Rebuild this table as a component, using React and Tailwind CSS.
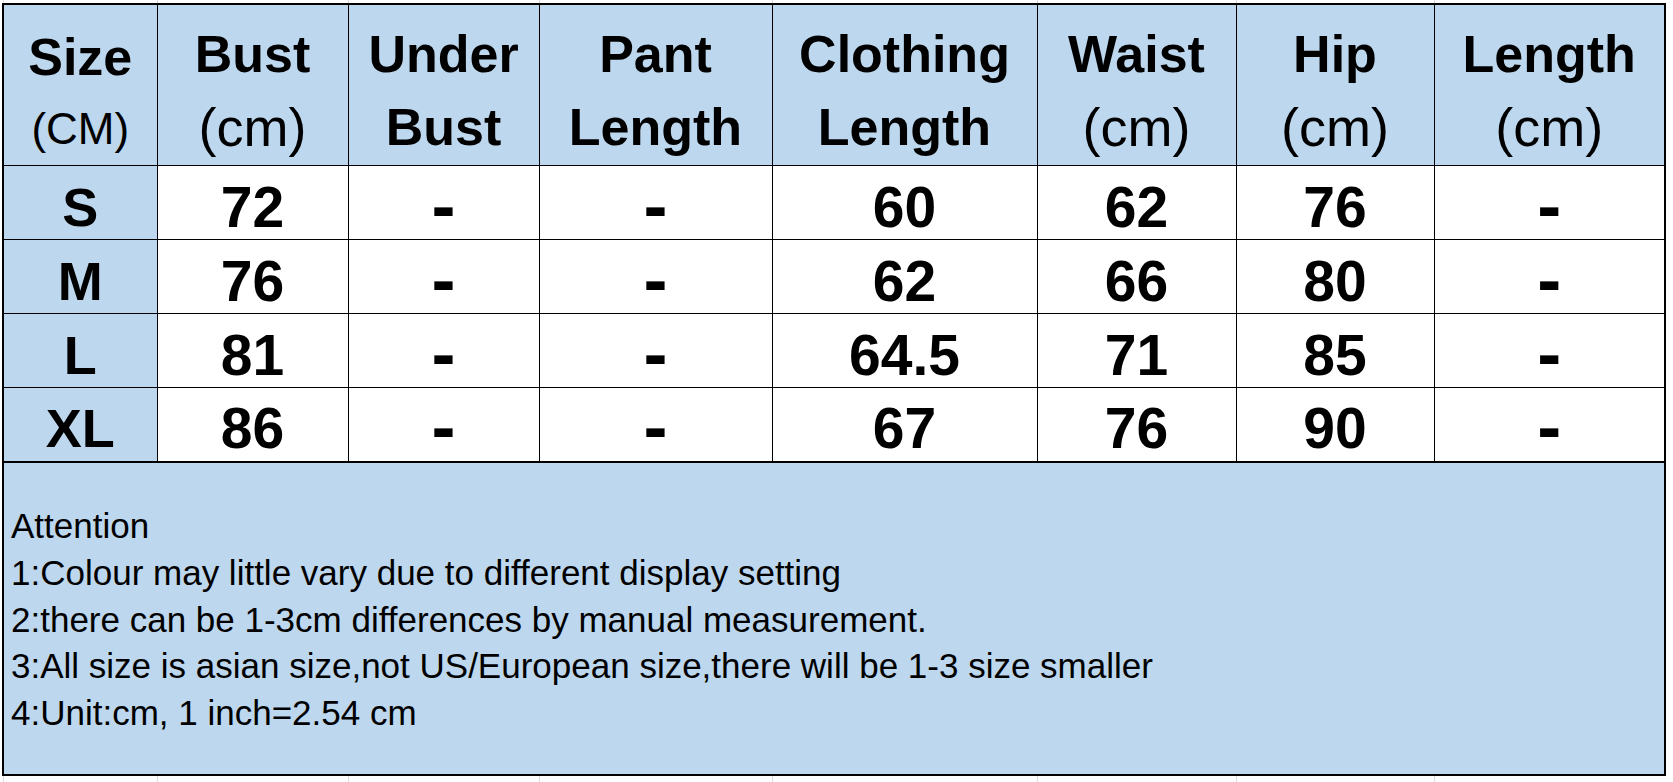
import React from 'react';

const cols = [154, 191, 191, 233, 265, 199, 198, 231];

const headers = [
  { top: 'Bust', bottom: '(cm)', bold2: false },
  { top: 'Under', bottom: 'Bust', bold2: true },
  { top: 'Pant', bottom: 'Length', bold2: true },
  { top: 'Clothing', bottom: 'Length', bold2: true },
  { top: 'Waist', bottom: '(cm)', bold2: false },
  { top: 'Hip', bottom: '(cm)', bold2: false },
  { top: 'Length', bottom: '(cm)', bold2: false },
];

const rows = [
  ['S', '72', '-', '-', '60', '62', '76', '-'],
  ['M', '76', '-', '-', '62', '66', '80', '-'],
  ['L', '81', '-', '-', '64.5', '71', '85', '-'],
  ['XL', '86', '-', '-', '67', '76', '90', '-'],
];

const notes = [
  'Attention',
  '1:Colour may little vary due to different display setting',
  '2:there can be 1-3cm differences by manual measurement.',
  '3:All size is asian size,not US/European size,there will be 1-3 size smaller',
  '4:Unit:cm, 1 inch=2.54 cm',
];

const GridStrip = ({ height }) => (
  <div className="flex" style={{ height }}>
    <div className="w-[3px]" />
    {cols.map((w, i) => (
      <div key={i} className="border-l border-[#dcdcdc] shrink-0" style={{ width: w }} />
    ))}
  </div>
);

const Cell = ({ value, first }) => {
  if (value === '-') {
    return (
      <td className="border border-black text-center align-middle bg-white p-0 pt-[4px] font-bold text-[72px] leading-[50px]">
        -
      </td>
    );
  }
  return (
    <td
      className={`border border-black text-center align-middle p-0 pt-[8px] font-bold leading-[54px] ${
        first ? 'bg-[#bdd7ee] text-[54px]' : 'bg-white text-[57px]'
      }`}
    >
      {value}
    </td>
  );
};

export default function App() {
  return (
    <div className="bg-white w-[1673px] h-[782px] overflow-hidden text-black font-['Liberation_Sans',Arial,sans-serif]">
      <GridStrip height={3} />
      <div className="pl-[2px]">
        <table className="border-collapse border-2 border-black table-fixed" style={{ width: 1663 }}>
          <colgroup>
            {cols.map((w, i) => (
              <col key={i} style={{ width: w }} />
            ))}
          </colgroup>
          <tbody>
            <tr className="h-[161px]">
              <td className="border border-black bg-[#bdd7ee] align-top text-center p-0 pt-[16px]">
                <div className="font-bold text-[52px] leading-[72px]">Size</div>
                <div className="text-[44px] leading-[72px]">(CM)</div>
              </td>
              {headers.map((h, i) => (
                <td key={i} className="border border-black bg-[#bdd7ee] align-top text-center p-0 pt-[12px]">
                  <div className="font-bold text-[52px] leading-[74px] whitespace-nowrap">{h.top}</div>
                  <div
                    className={`leading-[72px] whitespace-nowrap ${
                      h.bold2 ? 'font-bold text-[52px]' : 'text-[54px]'
                    }`}
                  >
                    {h.bottom}
                  </div>
                </td>
              ))}
            </tr>
            {rows.map((r, ri) => (
              <tr key={ri} className="h-[74px]">
                {r.map((v, ci) => (
                  <Cell key={ci} value={v} first={ci === 0} />
                ))}
              </tr>
            ))}
            <tr className="h-[313px]">
              <td colSpan={8} className="border-2 border-black bg-[#bdd7ee] align-middle p-0 pl-[7px] pt-[4px]">
                {notes.map((n, i) => (
                  <div key={i} className="text-[35px] leading-[46.75px] whitespace-nowrap">
                    {n}
                  </div>
                ))}
              </td>
            </tr>
          </tbody>
        </table>
      </div>
      <GridStrip height={10} />
    </div>
  );
}
